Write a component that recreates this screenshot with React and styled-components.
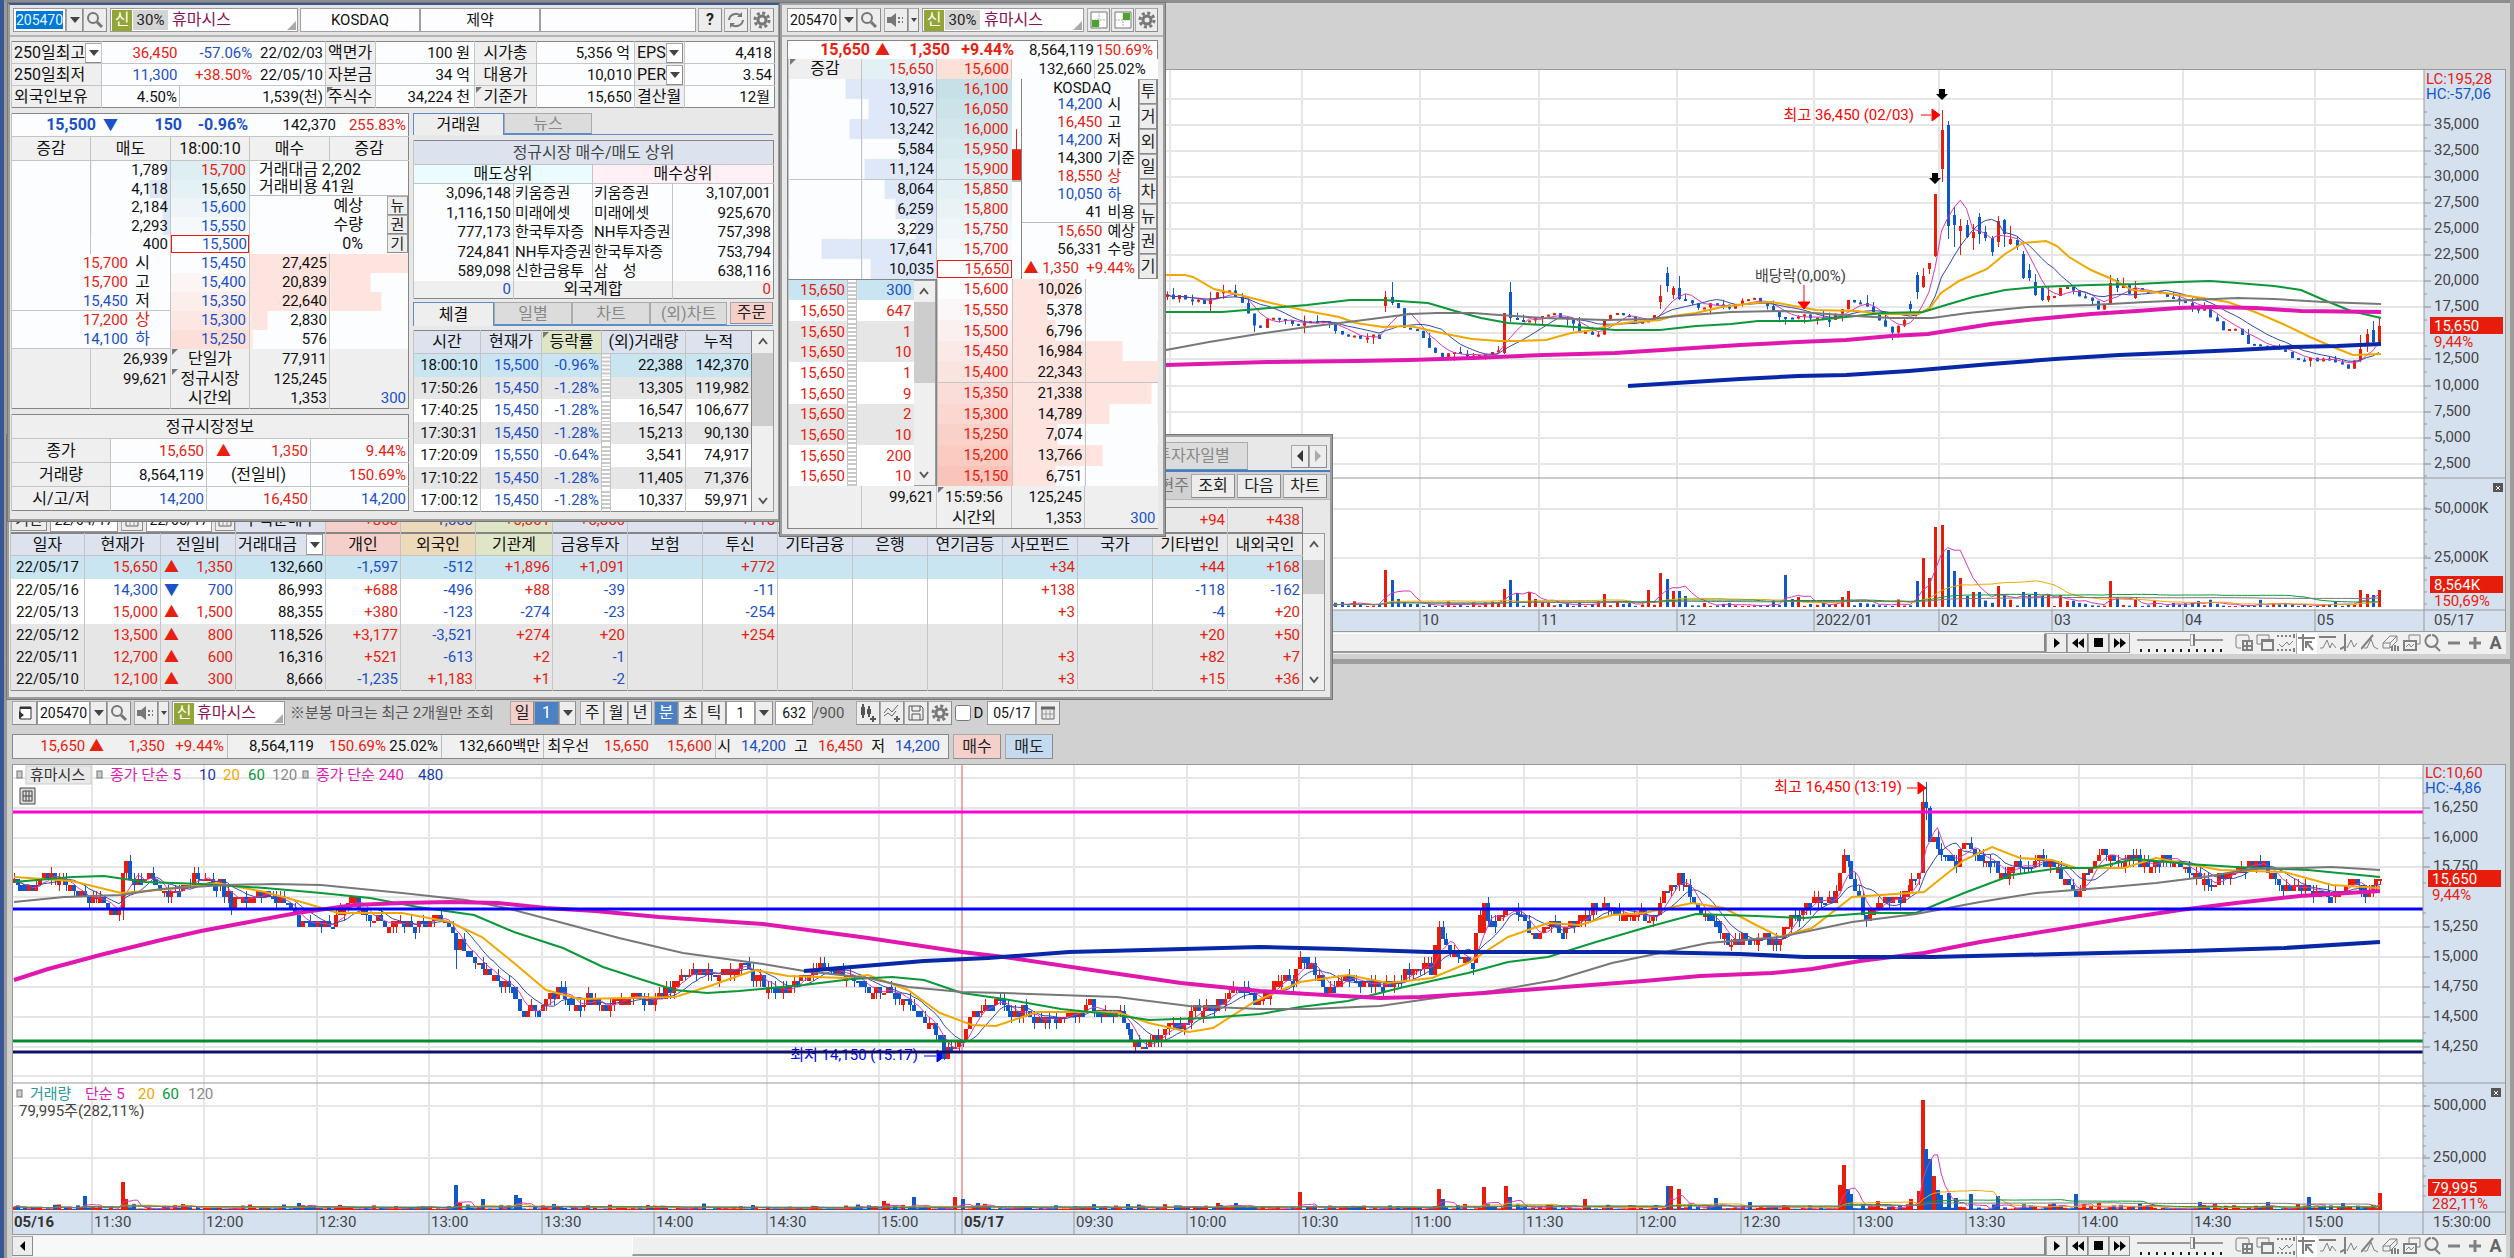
import React from "react";
import styled, { createGlobalStyle, css } from "styled-components";

const RED = "#e8210f";
const BLUE = "#1a50c8";
const UP = "#e81c0a";
const DOWN = "#1058c8";
const FONT = `Roboto, "Noto Sans CJK KR", sans-serif`;

const GlobalStyle = createGlobalStyle`
  * { box-sizing: border-box; }
  body { margin: 0; background: #d1d1d1; color: #111; font: 16px/18px ${FONT}; }
  button, input, table { font: inherit; color: inherit; }
  table { border-collapse: collapse; table-layout: fixed; }
  td, th { padding: 0; font-weight: 400; }
`;

/* ---------- layout ---------- */

const Desktop = styled.div`
  position: relative;
  min-height: 100vh;
  overflow: hidden;
  display: flex;
  flex-direction: column;
  border-left: 4px solid #3a5795;
  border-right: 4px solid #9c9c9c;
`;

const ChartWindow = styled.section`
  display: flex;
  flex-direction: column;
  padding: ${p => p.$top}px 4px 0 8px;
  border-left: 3px solid #9a9a9a;
  background: #d1d1d1;
`;

const UpperWindow = styled(ChartWindow)`
  padding-left: 0;
  padding-right: 4px;
  padding-bottom: 5px;
  border-bottom: 5px solid #9e9e9e;
  border-top: 3px solid #8d8d8d;
`;

const LowerWindow = styled(ChartWindow)`
  flex: 1;
  padding-left: 5px;
`;

const FloatingWindow = styled.section`
  position: absolute;
  left: ${p => p.$x}px;
  top: ${p => p.$y}px;
  width: ${p => p.$w}px;
  height: ${p => p.$h}px;
  background: #e8e8e8;
  border: 3px solid #9c9c9c;
  border-top: 3px solid ${p => p.$accent || "#a0a4ab"};
  outline: 1px solid #777;
  outline-offset: -1px;
  overflow: hidden;
`;

const Row = styled.div`
  display: flex;
  align-items: ${p => p.$align || "center"};
  gap: ${p => p.$gap || 0}px;
  padding: ${p => p.$pad || 0};
  height: ${p => (p.$h ? p.$h + "px" : "auto")};
`;

const Column = styled.div`
  display: flex;
  flex-direction: column;
  width: ${p => (p.$w ? p.$w + "px" : "auto")};
`;

const ToolRow = styled(Row)`
  background: #e4e4e4;
  height: 32px;
  padding: 0 3px;
  border-bottom: 2px solid #b4b4b4;
`;

const Gap = styled.div`
  width: ${p => p.$w}px;
  flex: none;
`;

/* ---------- controls ---------- */

const Button = styled.button`
  display: inline-flex;
  align-items: center;
  justify-content: center;
  flex: none;
  width: ${p => p.$w}px;
  height: ${p => p.$h || 24}px;
  padding: 0;
  white-space: nowrap;
  color: ${p => p.$c || "#222"};
  background: ${p => p.$bg || "#ededed"};
  border: 1px solid #a8a8a8;
  border-right-color: #8c8c8c;
  border-bottom-color: #8c8c8c;
`;

const CodeInput = styled.input`
  width: ${p => p.$w}px;
  height: 24px;
  flex: none;
  padding: 0;
  border: 1px solid #999;
  border-radius: 0;
  background: #fff;
  outline: 0;
  font-size: 14px;
  text-align: center;
  ${p =>
    p.$selected &&
    css`
      color: #e6f6ff;
      background: #0078d7;
      box-shadow: inset 0 0 0 2px #fff;
    `}
`;

const NameBox = styled.div`
  position: relative;
  display: flex;
  align-items: center;
  flex: none;
  width: ${p => p.$w}px;
  height: 24px;
  padding-left: 1px;
  color: #8c1055;
  background: #fff;
  border: 1px solid #999;
  &::after {
    content: "";
    position: absolute;
    right: 1px;
    bottom: 1px;
    border-left: 9px solid transparent;
    border-bottom: 9px solid #aaa;
  }
`;

const Badge = styled.span`
  width: 20px;
  height: 21px;
  line-height: 20px;
  text-align: center;
  color: #fff;
  background: #93a536;
`;

const Margin = styled.span`
  width: 35px;
  height: 20px;
  line-height: 20px;
  margin: 0 4px 0 1px;
  text-align: center;
  font-size: 15px;
  color: #222;
  background: #d4d4d4;
`;

const Field = styled.div`
  width: ${p => p.$w}px;
  height: 24px;
  flex: none;
  line-height: 22px;
  text-align: center;
  font-size: 15px;
  background: #fdfdff;
  border: 1px solid #a0a0a0;
`;

const Caret = () => (
  <svg width="10" height="6" viewBox="0 0 10 6">
    <path d="M0 0h10L5 6z" fill="#444" />
  </svg>
);

const Search = () => (
  <svg width="18" height="18" viewBox="0 0 18 18" fill="none" stroke="#777" strokeWidth="2">
    <circle cx="7" cy="7" r="5" />
    <path d="M11 11l5 5" strokeWidth="3" />
  </svg>
);

const Speaker = () => (
  <svg width="18" height="14" viewBox="0 0 18 14" fill="#777">
    <path d="M0 4h4l5-4v14l-5-4H0z" />
    <path d="M11 4h2v2h-2zM11 8h2v2h-2zM15 4h1v2h-1zM15 8h1v2h-1z" />
  </svg>
);

const Gear = () => (
  <svg width="18" height="18" viewBox="0 0 18 18" fill="none" stroke="#777">
    <circle cx="9" cy="9" r="4" strokeWidth="3" />
    <circle cx="9" cy="9" r="7" strokeWidth="3" strokeDasharray="3 2.5" />
  </svg>
);

const Refresh = () => (
  <svg width="18" height="18" viewBox="0 0 18 18" fill="none" stroke="#777" strokeWidth="2">
    <path d="M2 9a7 7 0 0 1 12-4M16 9a7 7 0 0 1-12 4" />
    <path d="M15 1v5h-5zM3 17v-5h5z" fill="#777" stroke="none" />
  </svg>
);

const Quad = ({ top }) => (
  <svg width="18" height="18" viewBox="0 0 18 18">
    <path d="M1 1h16v16H1z" fill="#fff" stroke="#777" />
    <path d="M9 1v16M1 9h16" stroke="#aaa" strokeDasharray="2 1" />
    <path d={top ? "M9 2h7v7H9z" : "M2 9h7v7H2z"} fill="#4aa52c" />
  </svg>
);

const CalendarIcon = () => (
  <svg width="16" height="16" viewBox="0 0 16 16" fill="none" stroke="#666">
    <path d="M2 3h12v11H2z" />
    <path d="M1 3h14" strokeWidth="3" />
    <path d="M6 5v9M10 5v9M2 9h12" stroke="#999" />
  </svg>
);

/* ---------- tables ---------- */

const Table = styled.table`
  width: ${p => p.$w}px;
  border: 1px solid #858585;
  background: #fcfdff;
`;

const Cell = styled.td`
  height: ${p => (p.$h ? p.$h + "px" : "auto")};
  padding: 0 ${p => (p.$pad === undefined ? 2 : p.$pad)}px;
  overflow: hidden;
  white-space: pre;
  line-height: 16px;
  font-size: ${p => p.$size || 15}px;
  font-weight: ${p => (p.$bold ? 700 : 400)};
  text-align: ${p => p.$a || "right"};
  color: ${p => p.$c || "#111"};
  background: ${p => p.$bg || "transparent"};
  border-left: ${p => (p.$plain ? "0" : "1px solid #c4c4c4")};
  border-bottom: ${p => (p.$line ? "1px solid #c4c4c4" : "0")};
`;

const Head = styled(Cell).attrs({ as: "th" })`
  font-size: 16px;
  text-align: ${p => p.$a || "center"};
`;

const Marked = styled.span`
  display: block;
  position: relative;
  &::before {
    content: "";
    position: absolute;
    left: -1px;
    top: -2px;
    border-top: 6px solid #777;
    border-right: 6px solid transparent;
  }
`;

const Boxed = styled.span`
  display: block;
  margin: 0 -2px;
  padding: 0 1px;
  border: 1px solid #e81c0a;
  background: #fff;
`;

const Split = styled.div`
  display: grid;
  grid-template-columns: ${p => p.$cols};
  align-items: center;
  text-align: right;
`;

const Txt = styled.span`
  color: ${p => p.$c || "#111"};
  font-weight: ${p => (p.$bold ? 700 : 400)};
  font-size: ${p => p.$size || 15}px;
  text-align: ${p => p.$a || "inherit"};
  white-space: pre;
`;

const Cols = ({ w }) => (
  <colgroup>
    {w.map((n, i) => (
      <col key={i} width={n} />
    ))}
  </colgroup>
);

const sign = v => (v.startsWith("+") ? RED : v.startsWith("-") ? BLUE : "#111");

/* ---------- tabs and scroll bars ---------- */

const Tabs = styled.div`
  display: flex;
  height: ${p => p.$h}px;
  border-bottom: 1px solid #5b8dc9;
`;

const Tab = styled.button`
  width: ${p => p.$w}px;
  height: ${p => p.$h}px;
  padding: 0;
  color: ${p => (p.$on ? "#111" : "#888")};
  background: ${p => (p.$on ? "#eee" : "#dcdcdc")};
  border: 1px solid ${p => (p.$on ? "#5b8dc9" : "#aaa")};
  border-bottom: ${p => (p.$on ? "0" : "1px solid #5b8dc9")};
`;

const ScrollTrack = styled.div`
  display: flex;
  flex-direction: column;
  justify-content: space-between;
  align-items: center;
  width: ${p => p.$w || 21}px;
  padding: 6px 0;
  background: linear-gradient(
    #efefef ${p => p.$from}px,
    #cdcdcd ${p => p.$from}px,
    #cdcdcd ${p => p.$to}px,
    #efefef ${p => p.$to}px
  );
  border: 1px solid #999;
  border-left: 0;
`;

const Chevron = ({ down }) => (
  <svg width="10" height="8" viewBox="0 0 10 8">
    <path d={down ? "M1 1l4 5 4-5" : "M1 7l4-5 4 5"} fill="none" stroke="#555" strokeWidth="2" />
  </svg>
);

const Scroll = ({ w, from, to }) => (
  <ScrollTrack $w={w} $from={from} $to={to}>
    <Chevron />
    <Chevron down />
  </ScrollTrack>
);

/* ---------- current price window ---------- */

const StockBadge = ({ w, margin }) => (
  <NameBox $w={w}>
    <Badge>신</Badge>
    {margin ? <Margin>30%</Margin> : <Gap $w={3} />}
    휴마시스
  </NameBox>
);

const LABEL = "#efefef";

const DropCell = styled.div`
  display: flex;
  justify-content: space-between;
  align-items: center;
`;

const Summary = () => (
  <Table $w={763}>
    <Cols w={[90, 78, 146, 50, 99, 62, 98, 50, 90]} />
    <tbody>
      <tr>
        <Head $h={22} $a="left" $bg={LABEL} $line>
          <DropCell>
            250일최고
            <Button $w={17} $h={20} $bg="#fff" aria-label="기간"><Caret /></Button>
          </DropCell>
        </Head>
        <Cell $c={RED} $line>36,450</Cell>
        <Cell $line $plain>
          <Split $cols="1fr 1fr"><Txt $c={BLUE}>-57.06%</Txt><Txt>22/02/03</Txt></Split>
        </Cell>
        <Head $a="left" $bg={LABEL} $line>액면가</Head>
        <Cell $line $pad={4}>100 원</Cell>
        <Head $bg={LABEL} $line>시가총</Head>
        <Cell $line $pad={4}>5,356 억</Cell>
        <Head $a="left" $bg={LABEL} $line>
          <DropCell>EPS<Button $w={17} $h={20} $bg="#fff" aria-label="EPS"><Caret /></Button></DropCell>
        </Head>
        <Cell $line>4,418</Cell>
      </tr>
      <tr>
        <Head $h={22} $a="left" $bg={LABEL} $line>250일최저</Head>
        <Cell $c={BLUE} $line>11,300</Cell>
        <Cell $line $plain>
          <Split $cols="1fr 1fr"><Txt $c={RED}>+38.50%</Txt><Txt>22/05/10</Txt></Split>
        </Cell>
        <Head $a="left" $bg={LABEL} $line>자본금</Head>
        <Cell $line $pad={4}>34 억</Cell>
        <Head $bg={LABEL} $line>대용가</Head>
        <Cell $line>10,010</Cell>
        <Head $a="left" $bg={LABEL} $line>
          <DropCell>PER<Button $w={17} $h={20} $bg="#fff" aria-label="PER"><Caret /></Button></DropCell>
        </Head>
        <Cell $line>3.54</Cell>
      </tr>
      <tr>
        <Head $h={22} $a="left" $bg={LABEL}>외국인보유</Head>
        <Cell>4.50%</Cell>
        <Cell>1,539(천)</Cell>
        <Head $a="left" $bg={LABEL}><Marked>주식수</Marked></Head>
        <Cell $pad={4}>34,224 천</Cell>
        <Head $bg={LABEL}><Marked>기준가</Marked></Head>
        <Cell>15,650</Cell>
        <Head $a="left" $bg={LABEL}>결산월</Head>
        <Cell $pad={4}>12월</Cell>
      </tr>
    </tbody>
  </Table>
);

const asksA = [
  ["1,789", "15,700", 8, RED],
  ["4,118", "15,650", 27, "#111"],
  ["2,184", "15,600", 10, BLUE],
  ["2,293", "15,550", 10, BLUE],
  ["400", "15,500", 0, BLUE],
];

const bidsA = [
  ["15,700", "시", RED, "15,450", "27,425", 200],
  ["15,700", "고", RED, "15,400", "20,839", 151],
  ["15,450", "저", BLUE, "15,350", "22,640", 166],
  ["17,200", "상", RED, "15,300", "2,830", 21],
  ["14,100", "하", BLUE, "15,250", "576", 3],
];

const totalsA = [
  ["26,939", "단일가", "77,911", ""],
  ["99,621", "정규시장", "125,245", ""],
  ["", "시간외", "1,353", "300"],
];

const rightBar = (pct, color) =>
  pct > 0 ? `linear-gradient(to left, ${color} ${pct}%, transparent ${pct}%)` : "transparent";
const leftBar = (pct, color) =>
  pct > 0 ? `linear-gradient(to right, ${color} ${pct}%, transparent ${pct}%)` : "transparent";
const clamp = (v, a, b) => Math.max(a, Math.min(b, v));

const QuoteText = styled.div`
  text-align: left;
  font-size: 16px;
  & > p {
    margin: 0;
    line-height: 17px;
    padding-left: 9px;
  }
  & > p + p {
    border-bottom: 1px solid #bbb;
  }
`;

const Expected = styled.div`
  display: flex;
`;

const ExpectedText = styled.div`
  flex: 1;
  padding-right: 24px;
  font-size: 16px;
  line-height: 19px;
  text-align: right;
`;

const BookA = () => (
  <Table $w={397}>
    <Cols w={[79, 80, 79, 80, 79]} />
    <tbody>
      <tr>
        <Cell colSpan={5} $h={23} $pad={0} $line>
          <Split $cols="84px 22px 64px 66px 88px 70px">
            <Txt $c={BLUE} $size={16} $bold>15,500</Txt>
            <Txt $c={BLUE}>▼</Txt>
            <Txt $c={BLUE} $size={16} $bold>150</Txt>
            <Txt $c={BLUE} $size={16} $bold>-0.96%</Txt>
            <Txt>142,370</Txt>
            <Txt $c={RED}>255.83%</Txt>
          </Split>
        </Cell>
      </tr>
      <tr>
        {["증감", "매도", "18:00:10", "매수", "증감"].map((t, i) => (
          <Head key={i} $h={24} $bg="#f0f0f0" $line>{t}</Head>
        ))}
      </tr>
      {asksA.map((r, i) => (
        <tr key={r[1]}>
          <Cell $h={i % 2 ? 18 : 19} />
          <Cell $bg={rightBar(r[2], "#dde7f8")}>{r[0]}</Cell>
          <Cell $c={r[3]} $bg={i < 4 ? `rgba(222,238,242,${1 - i * 0.25})` : "#fff"} $pad={i === 4 ? 2 : 3}>
            {i === 4 ? <Boxed>{r[1]}</Boxed> : r[1]}
          </Cell>
          {i === 0 && (
            <Cell colSpan={2} rowSpan={5} $pad={0} $a="left">
              <QuoteText>
                <p>거래대금 2,202</p>
                <p>거래비용 41원</p>
              </QuoteText>
              <Expected>
                <ExpectedText>
                  예상<br />수량<br />0%
                </ExpectedText>
                <Column>
                  {["뉴", "권", "기"].map(t => (
                    <Button key={t} $w={21} $h={19}>{t}</Button>
                  ))}
                </Column>
              </Expected>
            </Cell>
          )}
        </tr>
      ))}
      {bidsA.map((r, i) => (
        <tr key={i}>
          <Cell $h={19} colSpan={2} $pad={0} $c={r[2]} $line={i === 2 || i === 4}>
            <Split $cols="116px 22px">
              <Txt $c={r[2]}>{r[0]}</Txt>
              <Txt $c={i < 3 ? "#111" : r[2]} $size={16}>{r[1]}</Txt>
            </Split>
          </Cell>
          <Cell $c={BLUE} $pad={3} $bg={`rgba(252,223,216,${i * 0.25})`}>{r[3]}</Cell>
          <Cell $bg={leftBar(clamp(r[5], 0, 100), "#fde4df")}>{r[4]}</Cell>
          <Cell $bg={leftBar(clamp(r[5] - 100, 0, 100), "#fde4df")} />
        </tr>
      ))}
      {totalsA.map((r, i) => (
        <tr key={i}>
          <Cell $h={20} $bg="#efefef" />
          <Cell $bg="#efefef">{r[0]}</Cell>
          <Cell $bg="#efefef" $a="center" $size={16}>{i < 2 ? <Marked>{r[1]}</Marked> : r[1]}</Cell>
          <Cell $bg="#efefef">{r[2]}</Cell>
          <Cell $bg="#efefef" $c={BLUE}>{r[3]}</Cell>
        </tr>
      ))}
    </tbody>
  </Table>
);

const Regular = () => (
  <Table $w={397}>
    <Cols w={[99, 96, 104, 98]} />
    <tbody>
      <tr><Head colSpan={4} $h={24} $bg={LABEL} $line>정규시장정보</Head></tr>
      <tr>
        <Head $h={24} $bg={LABEL} $line>종가</Head>
        <Cell $c={RED} $line>15,650</Cell>
        <Cell $line><Split $cols="22px 1fr"><Txt $c={RED}>▲</Txt><Txt $c={RED}>1,350</Txt></Split></Cell>
        <Cell $c={RED} $line>9.44%</Cell>
      </tr>
      <tr>
        <Head $h={24} $bg={LABEL} $line>거래량</Head>
        <Cell $line>8,564,119</Cell>
        <Cell $a="center" $size={16} $line>(전일비)</Cell>
        <Cell $c={RED} $line>150.69%</Cell>
      </tr>
      <tr>
        <Head $h={24} $bg={LABEL}>시/고/저</Head>
        <Cell $c={BLUE}>14,200</Cell>
        <Cell $c={RED}>16,450</Cell>
        <Cell $c={BLUE}>14,200</Cell>
      </tr>
    </tbody>
  </Table>
);

const brokers = [
  ["3,096,148", "키움증권", "키움증권", "3,107,001"],
  ["1,116,150", "미래에셋", "미래에셋", "925,670"],
  ["777,173", "한국투자증", "NH투자증권", "757,398"],
  ["724,841", "NH투자증권", "한국투자증", "753,794"],
  ["589,098", "신한금융투", "삼　성", "638,116"],
];

const Brokers = () => (
  <Table $w={360}>
    <Cols w={[100, 79, 80, 101]} />
    <tbody>
      <tr><Head colSpan={4} $h={24} $bg="#dce3ee" $c="#444" $line>정규시장 매수/매도 상위</Head></tr>
      <tr>
        <Head colSpan={2} $h={19} $bg="#eafcff" $line>매도상위</Head>
        <Head colSpan={2} $bg="#fff0f8" $line>매수상위</Head>
      </tr>
      {brokers.map((r, i) => (
        <tr key={r[0]}>
          <Cell $h={i % 2 ? 20 : 19}>{r[0]}</Cell>
          <Cell $a="left" $pad={1}>{r[1]}</Cell>
          <Cell $a="left" $pad={1}>{r[2]}</Cell>
          <Cell>{r[3]}</Cell>
        </tr>
      ))}
      <tr>
        <Cell $h={18} $bg={LABEL} $c={BLUE}>0</Cell>
        <Cell colSpan={2} $bg={LABEL} $a="center" $size={16}>외국계합</Cell>
        <Cell $bg={LABEL} $c={RED}>0</Cell>
      </tr>
    </tbody>
  </Table>
);

const trades = [
  ["18:00:10", "15,500", "-0.96%", "22,388", "142,370"],
  ["17:50:26", "15,450", "-1.28%", "13,305", "119,982"],
  ["17:40:25", "15,450", "-1.28%", "16,547", "106,677"],
  ["17:30:31", "15,450", "-1.28%", "15,213", "90,130"],
  ["17:20:09", "15,550", "-0.64%", "3,541", "74,917"],
  ["17:10:22", "15,450", "-1.28%", "11,405", "71,376"],
  ["17:00:12", "15,450", "-1.28%", "10,337", "59,971"],
];

const STRIPES = "repeating-linear-gradient(#fff 0 2px, #c8c8c8 2px 4px)";

const Trades = () => (
  <Row $align="stretch">
    <Table $w={338}>
      <Cols w={[67, 61, 60, 9, 75, 66]} />
      <thead>
        <tr>
          <Head $h={23} $bg="#dce3ee" $line>시간</Head>
          <Head $bg="#dce3ee" $line>현재가</Head>
          <Head $bg="#dfe6c8" $line><Marked>등락률</Marked></Head>
          <Head colSpan={2} $bg="#dce3ee" $line>(외)거래량</Head>
          <Head $bg="#dce3ee" $line>누적</Head>
        </tr>
      </thead>
      <tbody>
        {trades.map((r, i) => {
          const bg = i === 0 ? "#c8e5f1" : i % 2 ? "#e6e6e6" : "#fff";
          return (
            <tr key={r[0]}>
              <Cell $h={i % 2 ? 22 : 23} $bg={bg}>{r[0]}</Cell>
              <Cell $c={BLUE} $bg={bg}>{r[1]}</Cell>
              <Cell $c={BLUE} $bg={bg}>{r[2]}</Cell>
              <Cell $bg={STRIPES} />
              <Cell $bg={bg}>{r[3]}</Cell>
              <Cell $bg={bg}>{r[4]}</Cell>
            </tr>
          );
        })}
      </tbody>
    </Table>
    <Scroll from={22} to={95} w={22} />
  </Row>
);

const CodeTools = ({ value, selected, speaker }) => (
  <>
    <CodeInput $w={53} $selected={selected} defaultValue={value} aria-label="종목코드" />
    <Button $w={17} aria-label="종목 목록"><Caret /></Button>
    <Button $w={24} aria-label="종목 검색"><Search /></Button>
    <Gap $w={3} />
    {speaker && (
      <>
        <Button $w={24} aria-label="음성"><Speaker /></Button>
        <Button $w={11} aria-label="음성 설정">
          <svg width="6" height="4" viewBox="0 0 6 4"><path d="M0 0h6L3 4z" fill="#444" /></svg>
        </Button>
        <Gap $w={3} />
      </>
    )}
  </>
);

const PriceWindow = () => (
  <FloatingWindow $x={3} $y={2} $w={774} $h={520} $accent="#3a5795">
    <ToolRow>
      <CodeTools value="205470" selected />
      <StockBadge w={188} margin />
      <Gap $w={2} />
      <Field $w={120}>KOSDAQ</Field>
      <Field $w={120}>제약</Field>
      <Field $w={156} />
      <Gap $w={2} />
      <Row $gap={2}>
        <Button $w={24}><b>?</b></Button>
        <Button $w={24} aria-label="새로고침"><Refresh /></Button>
        <Button $w={24} aria-label="설정"><Gear /></Button>
      </Row>
    </ToolRow>
    <Row $pad="4px 0 0 1px"><Summary /></Row>
    <Row $align="flex-start" $gap={5} $pad="5px 0 0 1px">
      <Column $w={397}>
        <BookA />
        <Row $pad="5px 0 0"><Regular /></Row>
      </Column>
      <Column $w={360}>
        <Tabs $h={22}>
          <Tab $w={91} $h={22} $on>거래원</Tab>
          <Tab $w={88} $h={21}>뉴스</Tab>
        </Tabs>
        <Row $pad="5px 0 3px"><Brokers /></Row>
        <Tabs $h={24}>
          <Tab $w={81} $h={24} $on>체결</Tab>
          <Tab $w={78} $h={23}>일별</Tab>
          <Tab $w={78} $h={23}>차트</Tab>
          <Tab $w={77} $h={23}>(외)차트</Tab>
          <Gap $w={3} />
          <Button $w={43} $h={22} $bg="#f5cfca">주문</Button>
        </Tabs>
        <Row $pad="4px 0 0"><Trades /></Row>
      </Column>
    </Row>
  </FloatingWindow>
);

/* ---------- order book window ---------- */

const asksB = [
  ["13,916", "16,100", 122],
  ["10,527", "16,050", 92],
  ["13,242", "16,000", 116],
  ["5,584", "15,950", 49],
  ["11,124", "15,900", 97],
  ["8,064", "15,850", 70],
  ["6,259", "15,800", 55],
  ["3,229", "15,750", 28],
  ["17,641", "15,700", 156],
  ["10,035", "15,650", 89],
];

const bidsB = [
  ["15,600", "10,026", 90],
  ["15,550", "5,378", 48],
  ["15,500", "6,796", 60],
  ["15,450", "16,984", 152],
  ["15,400", "22,343", 200],
  ["15,350", "21,338", 191],
  ["15,300", "14,789", 133],
  ["15,250", "7,074", 63],
  ["15,200", "13,766", 123],
  ["15,150", "6,751", 60],
];

const ticks = ["300", "647", "1", "10", "1", "9", "2", "10", "200", "10"];

const Panel = styled.div`
  width: 371px;
  border: 1px solid #858585;
  background: #fcfdff;
  & table { border: 0; }
`;

const Info = styled.div`
  width: 118px;
  border-left: 1px solid #858585;
  border-right: 1px solid #858585;
`;

const InfoRow = styled.div`
  display: grid;
  grid-template-columns: 80px 1fr;
  column-gap: 5px;
  height: ${p => (p.$line ? 19 : 18)}px;
  line-height: 17px;
  border-bottom: ${p => (p.$line ? "1px solid #bbb" : "0")};
  & > :first-child { text-align: right; }
`;

const InfoTitle = styled.div`
  height: 17px;
  line-height: 18px;
  padding-left: 4px;
  font-size: 15px;
  text-align: center;
`;

const Change = styled.div`
  display: flex;
  justify-content: space-between;
  padding: 0 3px 0 1px;
`;

const infoRows = [
  ["14,200", "시", BLUE, "#111"],
  ["16,450", "고", RED, "#111"],
  ["14,200", "저", BLUE, "#111"],
  ["14,300", "기준", "#111", "#111"],
  ["18,550", "상", RED, RED],
  ["10,050", "하", BLUE, BLUE],
  ["41", "비용", "#111", "#111"],
  ["15,650", "예상", RED, "#111"],
  ["56,331", "수량", "#111", "#111"],
];

const TickTable = styled(Column)`
  border-right: 1px solid #858585;
  border-top: 1px solid #858585;
`;

const BookB = () => (
  <Panel>
    <Split $cols="82px 20px 60px 64px 80px 59px">
      <Txt $c={RED} $size={16} $bold>15,650</Txt>
      <Txt $c={RED}>▲</Txt>
      <Txt $c={RED} $size={16} $bold>1,350</Txt>
      <Txt $c={RED} $size={16} $bold>+9.44%</Txt>
      <Txt>8,564,119</Txt>
      <Txt $c={RED}>150.69%</Txt>
    </Split>
    <Table $w={369}>
      <Cols w={[73, 75, 75, 83, 63]} />
      <tbody>
        <tr>
          <Head $h={20} $bg="#efefef"><Marked>증감</Marked></Head>
          <Cell $c={RED} $bg="#e4f1f4">15,650</Cell>
          <Cell $c={RED} $bg="#fde0d8">15,600</Cell>
          <Cell>132,660</Cell>
          <Cell $a="left">25.02%</Cell>
        </tr>
      </tbody>
    </Table>
    <Row $align="stretch">
      <Table $w={223}>
        <Cols w={[73, 75, 75]} />
        <tbody>
          {asksB.map((r, i) => (
            <tr key={r[1]}>
              <Cell $h={20} $line={i === 4} $bg={rightBar(clamp(r[2] - 100, 0, 100), "#dfe8f9")} />
              <Cell $line={i === 4} $bg={rightBar(clamp(r[2], 0, 100), "#dfe8f9")}>{r[0]}</Cell>
              <Cell $c={RED} $line={i === 4} $pad={i === 9 ? 2 : 3} $bg={`rgba(197,224,230,${1 - i * 0.11})`}>
                {i === 9 ? <Boxed>{r[1]}</Boxed> : r[1]}
              </Cell>
            </tr>
          ))}
        </tbody>
      </Table>
      <svg width="10" height="200" viewBox="0 0 10 200">
        <path d="M4 50h1v20H4zM0 70h10v31H0z" fill={UP} />
        <path d="M0 102h10" stroke="#777" />
      </svg>
      <Info>
        <InfoTitle>KOSDAQ</InfoTitle>
        {infoRows.map((r, i) => (
          <InfoRow key={i} $line={i === 6}>
            <Txt $c={r[2]}>{r[0]}</Txt>
            <Txt $c={r[3]}>{r[1]}</Txt>
          </InfoRow>
        ))}
        <Change><Txt $c={RED}>▲ 1,350</Txt><Txt $c={RED}>+9.44%</Txt></Change>
      </Info>
      <Column>
        {["투", "거", "외", "일", "차", "뉴", "권", "기"].map(t => (
          <Button key={t} $w={18} $h={25}>{t}</Button>
        ))}
      </Column>
    </Row>
    <Row $align="stretch">
      <TickTable>
        <Row $align="stretch">
          <Table $w={125}>
            <Cols w={[59, 9, 57]} />
            <tbody>
              {ticks.map((t, i) => {
                const bg = i === 0 ? "#c8e5f1" : [2, 3, 6, 7].includes(i) ? "#e6e6e6" : "#fff";
                return (
                  <tr key={i}>
                    <Cell $h={i % 3 ? 21 : 20} $c={RED} $bg={bg}>15,650</Cell>
                    <Cell $bg={STRIPES} />
                    <Cell $c={i ? RED : BLUE} $bg={bg}>{t}</Cell>
                  </tr>
                );
              })}
            </tbody>
          </Table>
          <Scroll from={21} to={102} w={22} />
        </Row>
      </TickTable>
      <Table $w={221}>
        <Cols w={[75, 73, 73]} />
        <tbody>
          {bidsB.map((r, i) => (
            <tr key={r[0]}>
              <Cell $h={i % 3 ? 21 : 20} $c={RED} $pad={3} $line={i === 4} $bg={`rgba(248,190,178,${i * 0.1})`}>{r[0]}</Cell>
              <Cell $line={i === 4} $bg={leftBar(clamp(r[2], 0, 100), "#fde4df")}>{r[1]}</Cell>
              <Cell $line={i === 4} $bg={leftBar(clamp(r[2] - 100, 0, 100), "#fde4df")} />
            </tr>
          ))}
        </tbody>
      </Table>
    </Row>
    <Table $w={369}>
      <Cols w={[73, 75, 75, 73, 73]} />
      <tbody>
        <tr>
          <Cell $h={21} $bg={LABEL} />
          <Cell $bg={LABEL}>99,621</Cell>
          <Cell $bg={LABEL} $a="center"><Marked>15:59:56</Marked></Cell>
          <Cell $bg={LABEL}>125,245</Cell>
          <Cell $bg={LABEL} />
        </tr>
        <tr>
          <Cell $h={21} $bg={LABEL} />
          <Cell $bg={LABEL} />
          <Cell $bg={LABEL} $a="center" $size={16}>시간외</Cell>
          <Cell $bg={LABEL}>1,353</Cell>
          <Cell $bg={LABEL} $c={BLUE}>300</Cell>
        </tr>
      </tbody>
    </Table>
  </Panel>
);

const OrderWindow = () => (
  <FloatingWindow $x={775} $y={2} $w={387} $h={535}>
    <ToolRow>
      <Gap $w={2} />
      <CodeTools value="205470" speaker />
      <StockBadge w={162} margin />
      <Gap $w={3} />
      <Row $gap={1}>
        <Button $w={23} aria-label="화면 분할"><Quad /></Button>
        <Button $w={23} aria-label="화면 배치"><Quad top /></Button>
        <Button $w={23} aria-label="설정"><Gear /></Button>
      </Row>
    </ToolRow>
    <Row $pad="3px 0 0 5px"><BookB /></Row>
  </FloatingWindow>
);

/* ---------- investor window ---------- */

const investorCols = [74, 76, 75, 90, 75, 75, 77, 75, 75, 75, 75, 75, 75, 75, 75, 75, 75];
const investorHeads = ["개인", "외국인", "기관계", "금융투자", "보험", "투신", "기타금융", "은행", "연기금등", "사모펀드", "국가", "기타법인", "내외국인"];
const headColors = { 개인: "#f5cfca", 외국인: "#ecdabb", 기관계: "#dfe6c8", 기타법인: "#e8e8e8", 내외국인: "#e8e8e8" };
const totals = ["+850", "-1,550", "+6,301", "+5,856", "", "+115", "", "", "", "", "", "+94", "+438"];

const investors = [
  ["22/05/17", "15,650", "▲", "1,350", "132,660", "-1,597", "-512", "+1,896", "+1,091", "", "+772", "", "", "", "+34", "", "+44", "+168"],
  ["22/05/16", "14,300", "▼", "700", "86,993", "+688", "-496", "+88", "-39", "", "-11", "", "", "", "+138", "", "-118", "-162"],
  ["22/05/13", "15,000", "▲", "1,500", "88,355", "+380", "-123", "-274", "-23", "", "-254", "", "", "", "+3", "", "-4", "+20"],
  ["22/05/12", "13,500", "▲", "800", "118,526", "+3,177", "-3,521", "+274", "+20", "", "+254", "", "", "", "", "", "+20", "+50"],
  ["22/05/11", "12,700", "▲", "600", "16,316", "+521", "-613", "+2", "-1", "", "", "", "", "", "+3", "", "+82", "+7"],
  ["22/05/10", "12,100", "▲", "300", "8,666", "-1,235", "+1,183", "+1", "-2", "", "", "", "", "", "+3", "", "+15", "+36"],
];

const InvestorTools = styled.div`
  display: flex;
  justify-content: flex-end;
  align-items: center;
  gap: 2px;
  height: 28px;
  padding-right: 3px;
  color: #777;
  background: #d1d1d1;
  border-bottom: 1px solid #b8b8b8;
`;

const InvestorTabs = styled.div`
  display: flex;
  justify-content: flex-end;
  align-items: center;
  height: 35px;
  padding: 5px 3px 0 0;
  border-bottom: 2px solid #4a7cc0;
`;

const Totals = () => (
  <Table $w={1292}>
    <Cols w={[225, 90, 75, 75, 77, 75, 75, 75, 75, 75, 75, 75, 75, 75, 75]} />
    <tbody>
      <tr>
        <Cell $h={24} $a="left" $bg="#e8e8e8" $pad={0}>
          <Row $gap={3}>
            <Button $w={36} $h={22}>기간</Button>
            <CodeInput $w={68} defaultValue="22/04/17" aria-label="시작일" />
            <Button $w={22} $h={22} aria-label="시작일 달력"><CalendarIcon /></Button>
            <CodeInput $w={66} defaultValue="22/05/17" aria-label="종료일" />
            <Button $w={20} $h={22} aria-label="종료일 달력"><CalendarIcon /></Button>
          </Row>
        </Cell>
        <Head $bg="#dce3ee">누적순매수</Head>
        {totals.map((t, i) => (
          <Cell key={i} $c={sign(t)} $bg={headColors[investorHeads[i]] || "#dce3ee"}>{t}</Cell>
        ))}
      </tr>
    </tbody>
  </Table>
);

const Investors = () => (
  <Row $align="stretch">
    <Table $w={1292}>
      <Cols w={investorCols} />
      <thead>
        <tr>
          <Head $h={22} $bg="#dce3ee" $line>일자</Head>
          <Head $bg="#dce3ee" $line>현재가</Head>
          <Head $bg="#dce3ee" $line>전일비</Head>
          <Head $bg="#dce3ee" $line>
            <DropCell>거래대금<Button $w={17} $h={21} $bg="#fff" aria-label="단위"><Caret /></Button></DropCell>
          </Head>
          {investorHeads.map(h => (
            <Head key={h} $bg={headColors[h] || "#dce3ee"} $line>{h}</Head>
          ))}
        </tr>
      </thead>
      <tbody>
        {investors.map((r, i) => {
          const bg = i === 0 ? "#c8e5f1" : i < 3 ? "#fff" : "#e6e6e6";
          const c = r[2] === "▲" ? RED : BLUE;
          return (
            <tr key={r[0]}>
              <Cell $h={i % 2 ? 22 : 23} $bg={bg} $a="center">{r[0]}</Cell>
              <Cell $c={c} $bg={bg}>{r[1]}</Cell>
              <Cell $c={c} $bg={bg}>
                <Split $cols="16px 1fr"><Txt $c={c}>{r[2]}</Txt><Txt $c={c}>{r[3]}</Txt></Split>
              </Cell>
              <Cell $bg={bg}>{r[4]}</Cell>
              {r.slice(5).map((v, k) => (
                <Cell key={k} $bg={bg} $c={sign(v)}>{v}</Cell>
              ))}
            </tr>
          );
        })}
      </tbody>
    </Table>
    <Scroll from={26} to={60} w={22} />
  </Row>
);

const InvestorWindow = () => (
  <FloatingWindow $x={2} $y={434} $w={1327} $h={266}>
    <InvestorTabs>
      <Tab $w={110} $h={28}>투자자일별</Tab>
      <Gap $w={43} />
      <Button $w={18} $h={23} aria-label="이전">
        <svg width="6" height="12" viewBox="0 0 6 12"><path d="M6 0v12L0 6z" fill="#333" /></svg>
      </Button>
      <Button $w={18} $h={23} aria-label="다음 탭">
        <svg width="6" height="12" viewBox="0 0 6 12"><path d="M0 0v12l6-6z" fill="#aaa" /></svg>
      </Button>
    </InvestorTabs>
    <InvestorTools>
      잔고현주
      <Button $w={44}>조회</Button>
      <Button $w={44}>다음</Button>
      <Button $w={44}>차트</Button>
    </InvestorTools>
    <Row $pad="7px 0 0 1px"><Totals /></Row>
    <Row $pad="0 0 0 1px"><Investors /></Row>
  </FloatingWindow>
);

/* ---------- chart data ---------- */

const seeded = seed => () => {
  seed = (seed * 16807) % 2147483647;
  return seed / 2147483647;
};

const pairs = text => text.trim().split(/\s+/).map(p => p.split(",").map(Number));

const valueAt = (path, x) => {
  const i = path.findIndex(p => p[0] >= x);
  if (i <= 0) return path[i === 0 ? 0 : path.length - 1][1];
  const [x0, y0] = path[i - 1];
  const [x1, y1] = path[i];
  return y0 + ((y1 - y0) * (x - x0)) / (x1 - x0);
};

const nearest = (rows, x, step) => rows.find(r => Math.abs(r[0] - x) < step / 2);

function buildCandles({ path, step, count, last, jitter, wick, tick, fixed, volumes, baseVolume, seed }) {
  const rnd = seeded(seed);
  const out = [];
  let prev = path[0][1];
  for (let i = 0; i < count; i++) {
    const x = last - (count - 1 - i) * step;
    let close = valueAt(path, x) + (rnd() - 0.5) * jitter;
    if (tick) close = Math.round((close - 3) / tick) * tick + 3;
    let bar = {
      x,
      up: close < prev || (close === prev && rnd() > 0.5),
      top: Math.min(prev, close),
      bottom: Math.max(prev, close),
    };
    // trades on a price grid keep bodies and wicks on whole ticks
    if (tick && bar.top === bar.bottom && rnd() > 0.4) bar.bottom += tick;
    const reach = tick ? tick : rnd() * wick;
    bar.high = bar.top - (rnd() > 0.6 ? reach : 0);
    bar.low = bar.bottom + (rnd() > 0.6 ? reach : 0);
    const f = fixed && nearest(fixed, x, step);
    if (f) {
      bar = { x, top: f[1], bottom: f[2], up: f[3] === 1, high: f[4] || f[1], low: f[5] || f[2] };
      close = bar.up ? bar.top : bar.bottom;
    }
    const v = nearest(volumes, x, step);
    bar.volume = v ? v[1] : 1 + rnd() * rnd() * baseVolume;
    bar.close = close;
    prev = close;
    out.push(bar);
  }
  return out;
}

const average = (bars, key, n) =>
  bars.map((b, i) => {
    const part = bars.slice(Math.max(0, i - n + 1), i + 1);
    return [b.x, part.reduce((s, p) => s + p[key], 0) / part.length];
  });

const line = pts => pts.map(p => `${p[0].toFixed(1)},${p[1].toFixed(1)}`).join(" ");

const dailyPath = pairs(`1166,297 1178,297 1205,302 1222,290 1236,295 1245,309 1252,324 1260,328 1267,316 1280,317
  1298,326 1312,323 1330,324 1339,332 1356,337 1379,337 1385,303 1392,300 1398,309 1405,328 1417,332 1423,336
  1430,347 1437,358 1446,351 1463,355 1481,355 1501,351 1504,330 1510,316 1517,320 1524,324 1531,319 1544,318
  1555,313 1568,318 1580,332 1592,337 1600,332 1606,316 1620,313 1642,324 1654,313 1660,300 1667,278 1673,292
  1680,293 1689,303 1702,311 1709,303 1727,307 1740,303 1754,299 1767,307 1780,320 1798,314 1807,316 1830,318
  1843,307 1850,299 1858,302 1866,306 1873,313 1879,322 1886,327 1892,333 1898,327 1904,320 1911,307 1917,283
  1923,280 1929,266 1936,200 1942,150 1948,215 1954,222 1960,228 1967,233 1979,225 1985,235 1992,245 1998,228
  2004,228 2017,244 2023,270 2029,276 2035,290 2042,297 2048,298 2054,295 2060,287 2073,290 2080,297 2091,300
  2098,308 2104,306 2111,290 2117,284 2130,292 2136,293 2160,292 2178,300 2192,307 2205,310 2223,328 2237,330
  2248,343 2260,344 2274,348 2283,353 2292,358 2301,360 2315,360 2328,360 2342,366 2348,371 2355,360 2361,353
  2367,339 2373,337 2379,328`);

// x, top, bottom, up, high, low
const dailyFixed = pairs(`1385,297,306,1,291,312 1392,297,303,0,282,305 1504,313,353,1,313,354 1510,292,318,0,282,322
  1660,296,302,1,285,309 1667,273,286,0,267,292 1673,288,295,1,286,299 1679,288,299,0,276,300
  1911,304,309,0,301,312 1917,275,292,0,272,299 1923,276,287,1,268,288 1929,263,269,1,263,274 1936,194,256,1,194,257
  1942,130,169,1,110,182 1948,125,226,0,121,239 1954,215,225,0,207,247 1960,226,231,1,219,255 1967,225,237,0,220,238
  1973,232,238,1,224,250 1979,217,234,0,213,244 1985,232,238,0,226,241 1992,238,252,0,236,256 1998,221,242,1,216,247
  2004,220,234,0,219,247 2010,239,244,1,226,245 2017,240,247,0,236,250 2023,254,278,0,251,279 2029,270,278,0,264,281
  2035,282,295,0,274,296 2042,288,300,0,286,301 2048,296,300,1,287,302 2111,283,303,1,275,305 2117,280,288,0,278,292
  2136,288,298,1,281,299 2361,349,360,1,335,362 2367,334,345,1,329,352 2373,330,342,0,321,345 2379,326,344,1,318,345`);

const dailyVolumes = pairs(`1385,37 1392,27 1398,8 1404,5 1504,18 1510,27 1517,14 1529,15 1535,8 1604,13 1648,17 1660,34
  1667,28 1673,16 1679,16 1685,11 1785,32 1792,8 1798,10 1842,10 1848,16 1917,26 1923,49 1929,29 1936,80 1942,82
  1948,57 1954,36 1960,29 1967,11 1973,15 1979,15 1998,21 2004,12 2023,15 2029,12 2035,15 2042,11 2048,12 2060,12
  2111,26 2117,10 2136,8 2361,17 2367,13 2373,12 2379,17`);

const daily = buildCandles({
  path: dailyPath, step: 6.25, count: 195, last: 2379, jitter: 5, wick: 8,
  fixed: dailyFixed, volumes: dailyVolumes, baseVolume: 8, seed: 41,
});

const dailyLines = [
  ["#d838b8", 1, average(daily, "close", 5)],
  ["#3048a8", 1, average(daily, "close", 10)],
  ["#f0a800", 2, pairs(`1166,275 1185,275 1193,277 1214,289 1240,295 1267,302 1289,307 1307,311 1339,317 1356,323 1383,327 1410,326 1428,330 1446,334 1472,339 1499,341 1517,341 1546,340 1571,333 1593,330 1611,325 1633,322 1660,320 1673,316 1696,313 1722,307 1754,303 1772,302 1794,306 1816,310 1856,311 1882,314 1918,314 1930,308 1941,293 1959,281 1987,269 2005,254 2023,243 2046,241 2057,246 2069,257 2091,270 2114,280 2132,290 2164,293 2196,297 2228,302 2255,312 2283,324 2310,337 2333,347 2353,355 2381,354`)],
  ["#0a9838", 2, pairs(`1166,312 1222,312 1258,309 1307,305 1350,300 1383,300 1428,303 1455,311 1481,318 1508,323 1544,325 1589,328 1615,330 1660,330 1696,326 1731,324 1758,321 1807,321 1856,316 1882,313 1923,312 1946,305 1973,297 2005,290 2037,287 2091,285 2137,284 2178,282 2210,281 2237,283 2274,286 2301,290 2324,300 2351,311 2381,318`)],
  ["#787878", 2, pairs(`1166,350 1209,342 1258,334 1307,327 1356,321 1410,314 1437,313 1473,313 1499,315 1544,318 1606,320 1651,319 1678,316 1731,312 1785,311 1856,316 1891,318 1932,318 1968,313 2028,307 2091,305 2146,302 2192,300 2237,298 2274,299 2324,302 2381,304`)],
  ["#e018b0", 4, pairs(`1166,365 1267,362 1356,361 1410,360 1473,358 1544,355 1615,353 1678,349 1740,345 1798,342 1846,340 1891,336 1928,334 1991,324 2037,319 2091,314 2137,311 2178,308 2210,307 2255,308 2301,311 2381,312`)],
  ["#0828a8", 4, pairs(`1628,386 1740,379 1798,376 1846,375 1909,371 1991,364 2055,359 2119,355 2192,352 2237,350 2292,347 2337,346 2381,344`)],
];

const minutePath = pairs(`14,883 32,890 44,875 56,883 72,888 84,897 96,898 108,910 119,913 121,880 125,860 131,880 143,875
  157,883 169,892 185,887 197,875 209,880 221,885 231,903 257,893 269,898 289,898 297,920 313,925 333,925 346,902
  354,898 362,913 374,917 386,922 414,925 434,917 446,923 456,940 462,947 474,960 486,970 502,983 514,990 521,1012
  538,1010 546,997 561,988 571,1003 587,997 603,1007 623,997 651,1003 667,990 683,980 699,973 723,970 743,965 755,978
  775,990 792,987 804,973 828,967 848,977 868,990 892,990 908,998 920,1017 936,1030 943,1057 952,1047 962,1043
  972,1013 984,1012 998,997 1009,1013 1025,1008 1037,1020 1061,1017 1077,1012 1091,1003 1101,1010 1121,1018 1131,1037
  1140,1045 1157,1037 1169,1028 1181,1027 1193,1010 1209,1010 1221,1000 1238,987 1250,997 1258,1003 1264,997 1276,980
  1292,980 1302,953 1308,967 1316,972 1324,990 1344,977 1364,983 1392,985 1408,973 1420,967 1432,972 1436,930 1448,950
  1456,957 1472,962 1482,907 1492,923 1510,910 1520,920 1536,937 1548,920 1564,930 1580,923 1592,905 1604,907 1616,913
  1636,910 1652,920 1664,893 1677,875 1688,890 1700,913 1716,923 1730,947 1740,937 1760,937 1776,942 1792,920 1812,902
  1832,900 1845,860 1856,890 1865,917 1880,903 1900,898 1920,870 1925,805 1932,840 1940,850 1948,857 1956,863 1964,840
  1976,853 1992,857 2000,877 2016,863 2028,867 2037,855 2048,860 2060,873 2077,893 2088,870 2101,847 2112,860 2132,860
  2152,870 2160,853 2180,863 2208,883 2228,877 2248,863 2264,863 2276,883 2300,885 2316,893 2340,892 2349,880 2368,895
  2380,879`);

const minuteFixed = pairs(`121,873,910,1,873,920 124,855,873,1,831,873 457,933,950,0,933,969 943,1035,1059,0,1035,1060
  1437,927,969,1,921,969 1482,903,933,1,903,933 1845,855,873,1,849,873 1923,802,873,1,790,873 1927,802,808,0,782,820
  1931,808,842,0,806,842`);

const minuteVolumes = pairs(`86,14 123,28 127,11 299,7 456,25 460,7 483,11 517,15 521,12 754,5 885,9 914,13 955,13 964,11
  976,7 1127,6 1217,7 1235,7 1301,18 1437,21 1442,11 1482,23 1506,24 1510,13 1586,11 1666,24 1670,24 1677,21 1717,12
  1749,8 1841,25 1845,45 1849,21 1853,16 1877,9 1912,11 1919,19 1923,110 1927,61 1931,51 1934,34 1938,20 1942,15 1949,17 1956,12
  1972,16 1997,14 2077,16 2100,7 2200,8 2269,8 2309,13 2343,7 2379,17`);

const minute = buildCandles({
  path: minutePath, step: 3.75, count: 632, last: 2380, jitter: 9, wick: 6, tick: 6,
  fixed: minuteFixed, volumes: minuteVolumes, baseVolume: 6, seed: 97,
});

const minuteLines = [
  ["#d838b8", 1, average(minute, "close", 5)],
  ["#3048a8", 1, average(minute, "close", 10)],
  ["#f0a800", 2, pairs(`14,877 72,881 121,893 169,889 217,883 265,892 305,903 338,913 402,913 450,922 482,937 514,963 546,990 579,999 675,997 707,987 755,970 788,976 844,978 868,975 908,990 940,1013 972,1025 996,1026 1037,1012 1117,1012 1149,1023 1189,1032 1213,1028 1254,1002 1300,982 1348,975 1388,983 1432,978 1468,963 1508,937 1548,923 1580,925 1612,915 1644,913 1692,903 1724,908 1756,925 1780,937 1812,928 1852,897 1924,892 1964,860 1992,847 2020,858 2052,860 2076,868 2124,868 2156,858 2220,870 2284,872 2332,885 2380,888`)],
  ["#0a9838", 2, pairs(`14,882 72,877 104,876 145,882 201,884 265,888 321,893 370,898 418,907 474,915 514,932 563,948 603,967 643,980 675,990 707,993 739,991 804,985 852,979 892,977 924,980 962,993 1004,999 1061,1009 1109,1014 1149,1020 1205,1018 1260,1014 1300,1007 1348,1001 1404,987 1468,973 1508,962 1548,957 1596,942 1644,928 1696,914 1756,916 1804,918 1868,913 1916,913 1964,893 2012,875 2060,868 2092,868 2136,859 2188,864 2236,867 2308,870 2380,877`)],
  ["#787878", 2, pairs(`14,902 64,897 121,895 161,889 225,885 273,884 321,885 402,893 466,900 506,908 563,923 619,938 683,953 763,964 804,971 868,978 908,987 962,992 1004,993 1117,997 1189,1006 1260,1009 1308,1009 1380,1006 1428,999 1492,991 1556,980 1612,963 1660,953 1708,943 1780,937 1852,922 1916,914 1980,902 2036,893 2100,888 2156,883 2204,877 2252,869 2300,868 2332,867 2380,870`)],
  ["#e018b0", 4, pairs(`14,980 48,969 104,954 161,940 201,931 249,922 297,913 354,905 402,903 450,902 498,903 546,908 595,911 659,917 763,924 868,938 962,952 1004,957 1085,969 1181,983 1260,991 1308,994 1380,998 1420,997 1484,993 1564,987 1644,981 1700,976 1772,973 1812,969 1860,961 1924,953 1980,942 2060,929 2140,916 2180,910 2236,903 2300,896 2380,891`)],
  ["#0828a8", 4, pairs(`804,971 852,967 924,961 988,958 1069,952 1260,947 1340,949 1428,952 1644,952 1740,954 1804,957 1932,957 2060,954 2188,951 2284,948 2380,942`)],
];

/* ---------- charts ---------- */

const ChartSvg = styled.svg`
  display: block;
  width: 100%;
  height: ${p => p.$h}px;
  background: #fff;
  font: 15px ${FONT};
`;

const Plot = ({ bars, lines, width, base }) => (
  <>
    {bars.map(b => {
      const c = b.up ? UP : DOWN;
      const h = Math.max(2, b.bottom - b.top);
      const left = Math.round(b.x) - Math.floor(width / 2);
      return (
        <g key={b.x} fill={c}>
          <rect x={Math.round(b.x)} y={b.high} width="1" height={Math.max(1, b.low - b.high)} />
          <rect x={left} y={b.top} width={width} height={h} />
          <rect x={left} y={base - b.volume} width={width} height={b.volume} />
        </g>
      );
    })}
    {lines.map(([c, w, pts], i) => (
      <polyline key={i} points={line(pts)} fill="none" stroke={c} strokeWidth={w} />
    ))}
  </>
);

const VolumeLines = ({ bars, base }) =>
  [["#d838b8", 5], ["#f0a800", 20], ["#0a9838", 60], ["#787878", 120]].map(([c, n]) => (
    <polyline
      key={n}
      points={line(average(bars, "volume", n).map(([x, v]) => [x, base - v]))}
      fill="none"
      stroke={c}
      strokeWidth="1"
    />
  ));

const Axis = ({ x, right, top, bottom, split, labels, volumeLabels, minor }) => (
  <g>
    <rect x={x} y={top} width={right - x} height={bottom - top} fill="#d6e1f0" />
    {minor.map(y => <path key={y} d={`M${x} ${y}h3`} stroke="#999" />)}
    {[...labels, ...volumeLabels].map(([t, y]) => (
      <g key={t}>
        <path d={`M${x} ${y}h7`} stroke="#888" />
        <text x={x + 10} y={y + 4} fill="#444">{t}</text>
      </g>
    ))}
    <path d={`M${x} ${top}v${bottom - top}M0 ${split}H${right}`} stroke="#999" fill="none" />
  </g>
);

const PriceTag = ({ x, y, value, change }) => (
  <g>
    <rect x={x} y={y} width="73" height="17" fill={UP} />
    <text x={x + 4} y={y + 14} fill="#fff">{value}</text>
    <text x={x + 4} y={y + 30} fill={RED}>{change}</text>
  </g>
);

const CloseMark = ({ x, y }) => (
  <g>
    <rect x={x} y={y} width="10" height="9" fill="#555" />
    <path d={`M${x + 3} ${y + 3}l4 4m0-4l-4 4`} stroke="#fff" />
  </g>
);

const rangeOf = (n, fn) => Array.from({ length: n }, (_, i) => fn(i));

const dailyY = price => Math.round(125 + ((35000 - price) / 2500) * 26.05);
const dailyLabels = rangeOf(15, i => [(37500 - i * 2500).toLocaleString("en-US"), dailyY(37500 - i * 2500)]);
const dailyMonths = [[1170, ""], [1302, ""], [1420, "10"], [1539, "11"], [1677, "12"], [1814, "2022/01"], [1939, "02"], [2052, "03"], [2183, "04"], [2315, "05"]];

const DailyChart = () => (
  <ChartSvg $h={563} viewBox="7 69 2499 563" preserveAspectRatio="xMaxYMid slice">
    <g stroke="#e6e6e6" strokeWidth="2" fill="none">
      {dailyLabels.map(([t, y]) => <path key={t} d={`M7 ${y}H2424`} />)}
      <path d="M7 509H2424M7 558H2424" />
      {dailyMonths.map(([x]) => <path key={x} d={`M${x} 69V610`} />)}
    </g>
    <Plot bars={daily} lines={dailyLines} width={3} base={607} />
    <VolumeLines bars={daily} base={607} />
    <Axis
      x={2424} right={2506} top={69} bottom={610} split={478}
      labels={dailyLabels.filter(([t]) => t !== "37,500" && t !== "15,000")}
      volumeLabels={[["50,000K", 509], ["25,000K", 558]]}
      minor={[...rangeOf(15, i => 112 + i * 26), ...rangeOf(11, i => 484 + i * 12)]}
    />
    <text x="2426" y="84" fill={RED}>LC:195,28</text>
    <text x="2426" y="99" fill={DOWN}>HC:-57,06</text>
    <PriceTag x={2430} y={317} value="15,650" change="9,44%" />
    <PriceTag x={2430} y={576} value="8,564K" change="150,69%" />
    <CloseMark x={2493} y={483} />
    <rect x="7" y="610" width="2499" height="22" fill="#d6e1f0" />
    <path d="M7 610H2506M2424 610v22" stroke="#999" />
    {dailyMonths.filter(m => m[1]).map(([x, t]) => (
      <g key={t}>
        <path d={`M${x} 610v22`} stroke="#999" />
        <text x={x + 2} y="625" fill="#444">{t}</text>
      </g>
    ))}
    <text x="2434" y="625" fill="#444">05/17</text>
    <path d="M7 69H2506V632H7" fill="none" stroke="#999" strokeWidth="2" />
    <text x="1914" y="120" fill="#f00" textAnchor="end">최고 36,450 (02/03)</text>
    <path d="M1921 115h10M1932 109l8 6-8 6z" fill="#f00" stroke="#f00" />
    <path d="M1939 89h6v5h3l-6 6-6-6h3zM1932 173h6v5h3l-6 6-6-6h3z" fill="#000" />
    <text x="1755" y="281" fill="#444">배당락(0,00%)</text>
    <path d="M1804 285v20M1798 302h12l-6 7z" fill="#f00" stroke="#f00" />
  </ChartSvg>
);

const minuteY = price => Math.round(957 + ((15000 - price) / 250) * 29.85);
const minuteLabels = rangeOf(11, i => [(16500 - i * 250).toLocaleString("en-US"), minuteY(16500 - i * 250)]);
const minuteTimes = [[92, "11:30"], [204, "12:00"], [317, "12:30"], [429, "13:00"], [542, "13:30"], [654, "14:00"], [767, "14:30"], [879, "15:00"], [1074, "09:30"], [1187, "10:00"], [1299, "10:30"], [1412, "11:00"], [1524, "11:30"], [1637, "12:00"], [1741, "12:30"], [1854, "13:00"], [1966, "13:30"], [2079, "14:00"], [2192, "14:30"], [2304, "15:00"]];

const Legend = ({ items, y }) =>
  items.map(([x, t, c]) =>
    t ? (
      <text key={x} x={x} y={y} fill={c}>{t}</text>
    ) : (
      <rect key={x} x={x} y={y - 9} width="5" height="7" fill="#ccc" stroke="#777" />
    )
  );

const MinuteChart = () => (
  <ChartSvg $h={471} viewBox="12 764 2494 471" preserveAspectRatio="xMaxYMid slice">
    <g stroke="#e6e6e6" strokeWidth="2" fill="none">
      {minuteLabels.map(([t, y]) => <path key={t} d={`M12 ${y}H2423`} />)}
      <path d="M12 1106H2423M12 1158H2423" />
      {minuteTimes.map(([x]) => <path key={x} d={`M${x} 764V1212`} />)}
      <path d="M955 764V1212M2379 764V1212" />
    </g>
    <path d="M962 764V1212" stroke="#e85050" />
    <text x="918" y="1060" fill="#00f" textAnchor="end">최저 14,150 (15:17)</text>
    <path d="M924 1056h12M937 1050l8 6-8 6z" fill="#00f" stroke="#00f" />
    <Plot bars={minute} lines={minuteLines} width={4} base={1210} />
    <VolumeLines bars={minute} base={1210} />
    <g strokeWidth="3">
      <path d="M12 812H2423" stroke="#ff00dc" />
      <path d="M12 909H2423" stroke="#0000ff" />
      <path d="M12 1041H2423" stroke="#0a8a30" />
      <path d="M12 1052H2423" stroke="#101068" />
    </g>
    <Axis
      x={2423} right={2505} top={764} bottom={1212} split={1083}
      labels={minuteLabels.filter(([t]) => !["16,500", "14,000", "15,500"].includes(t))}
      volumeLabels={[["500,000", 1106], ["250,000", 1158]]}
      minor={[...rangeOf(10, i => 793 + i * 30), ...rangeOf(12, i => 1086 + i * 10)]}
    />
    <text x="2425" y="778" fill={RED}>LC:10,60</text>
    <text x="2425" y="793" fill={DOWN}>HC:-4,86</text>
    <PriceTag x={2428} y={870} value="15,650" change="9,44%" />
    <PriceTag x={2428} y={1179} value="79,995" change="282,11%" />
    <CloseMark x={2491} y={1088} />
    <rect x="12" y="1212" width="2494" height="22" fill="#d6e1f0" />
    <path d="M12 1212H2506M2423 1212v22M955 1212v22M962 1212v22M2379 1212v22" stroke="#999" />
    {minuteTimes.map(([x, t]) => (
      <g key={x}>
        <path d={`M${x} 1212v22`} stroke="#999" />
        <text x={x + 2} y="1227" fill="#444">{t}</text>
      </g>
    ))}
    <text x="14" y="1227" fill="#333" fontWeight="700">05/16</text>
    <text x="964" y="1227" fill="#333" fontWeight="700">05/17</text>
    <text x="2433" y="1227" fill="#444">15:30:00</text>
    <rect x="12" y="764" width="2494" height="471" fill="none" stroke="#999" strokeWidth="2" />
    <rect x="26" y="766" width="65" height="18" fill="#e8e8e8" stroke="#ccc" />
    <Legend
      y={780}
      items={[
        [17, ""], [30, "휴마시스", "#333"], [97, ""], [110, "종가 단순 5", "#e018b0"], [199, "10", "#1838b8"],
        [223, "20", "#f0a800"], [248, "60", "#0a9838"], [272, "120", "#888"], [303, ""],
        [316, "종가 단순 240", "#e018b0"], [418, "480", "#1838b8"],
      ]}
    />
    <path d="M20 788h15v16H20zM23 791h9v10h-9zM26 791v10M29 791v10M23 796h9" fill="#ddd" stroke="#444" />
    <Legend
      y={1099}
      items={[[17, ""], [30, "거래량", "#2a9898"], [85, "단순 5", "#e018b0"], [138, "20", "#f0a800"], [162, "60", "#0a9838"], [188, "120", "#888"]]}
    />
    <text x="19" y="1116" fill="#444">79,995주(282,11%)</text>
    <text x="1902" y="792" fill="#f00" textAnchor="end">최고 16,450 (13:19)</text>
    <path d="M1907 788h10M1918 782l8 6-8 6z" fill="#f00" stroke="#f00" />
  </ChartSvg>
);

/* ---------- playback bar ---------- */

const Playback = styled.div`
  display: flex;
  align-items: center;
  height: 22px;
  background: #f0f0f0;
`;

const Thumb = styled.div`
  flex: 1;
  height: 20px;
  background: #efefef;
  border: 1px solid #fff;
  border-right: 2px solid #888;
  border-bottom: 2px solid #999;
`;

const Groove = styled.div`
  width: 599px;
  height: 20px;
  background: #f8f8f8;
`;

const SliderBox = styled.label`
  display: block;
  width: 86px;
  height: 20px;
  margin: 0 10px 0 7px;
  background: repeating-linear-gradient(to right, #222 0 2px, transparent 2px 8px) 3px 16px / 82px 3px no-repeat;
`;

const Slider = styled.input`
  display: block;
  appearance: none;
  width: 86px;
  height: 14px;
  margin: 0;
  background: linear-gradient(#999, #999) 0 6px / 86px 2px no-repeat;
  &::-webkit-slider-thumb {
    appearance: none;
    width: 5px;
    height: 12px;
    background: #f4f4f4;
    border: 1px solid #aaa;
    border-right: 2px solid #777;
  }
`;

const IconButton = styled.button`
  display: flex;
  align-items: center;
  justify-content: center;
  width: 21px;
  height: 21px;
  flex: none;
  padding: 0;
  border: 0;
  background: ${p => (p.$on ? "#fff" : "transparent")};
  border-left: ${p => (p.$on ? "1px solid #aaa" : "0")};
`;

const chartTools = [
  ["새 창", [["M14 6V3a2 2 0 0 0-2-2H3a2 2 0 0 0-2 2v9a2 2 0 0 0 2 2h3"], ["M8 7h9v9H8zM12 7v9M8 12h9", "", 2]]],
  ["겹치기", [["M6 10H1V1h12v5"], ["M6 6h11v10H6zM6 7h11", "", 2]]],
  ["영역", [["M0 2h16M0 16h16", "2 2", 2], ["M2 10l3 3 5-5 2 3 4-4"], ["M17 0v4M17 14v4", "", 2]]],
  ["십자선", [["M0 4h17M5 0v17", "", 2], ["M8 8l7 8M8 14V8h6", "", 2]]],
  ["고가선", [["M0 3h17", "", 2], ["M1 14h3l4-8 3 8 2-5 4 5"]]],
  ["저가선", [["M5 0v17M0 15l6-3", "", 2], ["M7 14l4-8 3 7 3-4"]]],
  ["추세선", [["M0 15L12 1", "", 2], ["M3 14h3l4-9 3 8 4 2"]]],
  ["지우개", [["M1 9l7-7h7l-7 7zM1 9v5h7V9M8 14l7-7V2"], ["M10 17v-5M13 17v-6M16 17v-5", "", 2]]],
  ["복사", [["M6 7V1h11v9h-3"], ["M1 7h12v9H1z", "", 2], ["M3 13l3-3 2 3 3-3"]]],
  ["돋보기", [["M7 1a6 6 0 1 0 1 0M11 12l5 5", "", 2]]],
  ["축소", [["M3 9h12", "", 3]]],
  ["확대", [["M3 9h12M9 3v12", "", 3]]],
];

const PlaybackBar = ({ groove }) => (
  <Playback>
    {groove && (
      <>
        <Button $w={21} $h={20} aria-label="왼쪽">
          <svg width="6" height="10" viewBox="0 0 6 10"><path d="M5 0v10L0 5z" fill="#000" /></svg>
        </Button>
        <Groove />
      </>
    )}
    <Thumb />
    {[
      ["재생", "M5 3l6 5-6 5z"],
      ["뒤로", "M8 3L2 8l6 5zM14 3L8 8l6 5z"],
      ["정지", "M3 3h9v9H3z"],
      ["앞으로", "M2 3l6 5-6 5zM8 3l6 5-6 5z"],
    ].map(([t, d]) => (
      <Button key={t} $w={21} $h={20} aria-label={t}>
        <svg width="16" height="16" viewBox="0 0 16 16"><path d={d} fill="#000" /></svg>
      </Button>
    ))}
    <SliderBox><Slider type="range" defaultValue="66" aria-label="재생 속도" /></SliderBox>
    {chartTools.map(([t, shapes]) => (
      <IconButton key={t} $on={t === "십자선"} aria-label={t}>
        <svg width="18" height="18" viewBox="0 0 18 18">
          {shapes.map(([d, dash, w]) => (
            <path key={d} d={d} fill="none" stroke="#808080" strokeWidth={w || 1} strokeDasharray={dash} />
          ))}
        </svg>
      </IconButton>
    ))}
    <IconButton aria-label="글꼴"><Txt $c="#666" $bold $size={18}>A</Txt></IconButton>
  </Playback>
);

/* ---------- minute chart tool bars ---------- */

const QuoteBar = styled.div`
  display: flex;
  align-items: center;
  width: 937px;
  height: 25px;
  background: #f0f0f0;
  border: 1px solid #888;
`;

const QuoteItem = styled.span`
  width: ${p => p.$w}px;
  height: 23px;
  line-height: 23px;
  padding-right: 3px;
  flex: none;
  text-align: right;
  white-space: pre;
  font-size: 15px;
  color: ${p => p.$c || "#111"};
  border-right: ${p => (p.$end ? "1px solid #bbb" : "0")};
`;

const Check = styled.label`
  display: flex;
  align-items: center;
  gap: 2px;
  font-size: 15px;
  & input { width: 16px; height: 16px; margin: 0; }
`;

const Note = styled.span`
  width: 225px;
  padding-left: 5px;
  color: #555;
  font-size: 15px;
  white-space: nowrap;
`;

const MinuteTools = () => (
  <Row $h={24}>
    <Button $w={25} aria-label="목록 열기">
      <svg width="16" height="16" viewBox="0 0 16 16"><path d="M3 2h11v12H3z" fill="#fff" stroke="#333" /><path d="M3 3h11" stroke="#333" strokeWidth="2" /><path d="M2 6l5 4-5 4z" fill="#333" /></svg>
    </Button>
    <CodeTools value="205470" speaker />
    <StockBadge w={113} />
    <Note>※분봉 마크는 최근 2개월만 조회</Note>
    <Button $w={24} $bg="#f5cfca">일</Button>
    <Button $w={25} $bg="#4a80c4" $c="#fff">1</Button>
    <Button $w={17} aria-label="일 간격"><Caret /></Button>
    <Gap $w={4} />
    <Button $w={24}>주</Button>
    <Button $w={24}>월</Button>
    <Button $w={24}>년</Button>
    <Gap $w={2} />
    <Button $w={24} $bg="#4a80c4" $c="#fff">분</Button>
    <Button $w={24}>초</Button>
    <Button $w={24}>틱</Button>
    <CodeInput $w={29} defaultValue="1" aria-label="분 간격" />
    <Button $w={18} aria-label="분 간격 목록"><Caret /></Button>
    <Gap $w={2} />
    <CodeInput $w={38} defaultValue="632" aria-label="표시 봉 수" />
    <Txt $c="#555">/900</Txt>
    <Gap $w={12} />
    <Button $w={24} aria-label="봉 유형">
      <svg width="18" height="18" viewBox="0 0 18 18"><path d="M2 3h4v8H2zM8 5h4v5H8z" fill="#555" /><path d="M4 0v14M10 2v11M11 15h6M14 12v6" stroke="#555" strokeWidth="2" /></svg>
    </Button>
    <Button $w={24} aria-label="지표 추가">
      <svg width="18" height="18" viewBox="0 0 18 18"><path d="M1 9l4-5 4 4 6-7M1 12l4-3 4 3 4-5" fill="none" stroke="#666" /><path d="M11 15h6M14 12v6" stroke="#666" strokeWidth="2" /></svg>
    </Button>
    <Button $w={24} aria-label="저장">
      <svg width="18" height="18" viewBox="0 0 18 18"><path d="M2 2h12l2 2v12H2zM5 2v5h8V2M5 16v-6h8v6" fill="none" stroke="#555" /></svg>
    </Button>
    <Button $w={24} aria-label="설정"><Gear /></Button>
    <Gap $w={3} />
    <Check><input type="checkbox" />D</Check>
    <Gap $w={4} />
    <CodeInput $w={49} defaultValue="05/17" aria-label="날짜" />
    <Button $w={24} aria-label="달력"><CalendarIcon /></Button>
  </Row>
);

const MinuteQuote = () => (
  <Row $gap={4}>
    <QuoteBar>
      <QuoteItem $w={94} $c={RED}>15,650 ▲</QuoteItem>
      <QuoteItem $w={61} $c={RED}>1,350</QuoteItem>
      <QuoteItem $w={60} $c={RED} $end>+9.44%</QuoteItem>
      <QuoteItem $w={89}>8,564,119</QuoteItem>
      <QuoteItem $w={72} $c={RED}>150.69%</QuoteItem>
      <QuoteItem $w={53} $end>25.02%</QuoteItem>
      <QuoteItem $w={102} $end>132,660백만</QuoteItem>
      <QuoteItem $w={48}>최우선</QuoteItem>
      <QuoteItem $w={60} $c={RED}>15,650</QuoteItem>
      <QuoteItem $w={64} $c={RED} $end>15,600</QuoteItem>
      <QuoteItem $w={18}>시</QuoteItem>
      <QuoteItem $w={55} $c={BLUE}>14,200</QuoteItem>
      <QuoteItem $w={22}>고</QuoteItem>
      <QuoteItem $w={55} $c={RED}>16,450</QuoteItem>
      <QuoteItem $w={22}>저</QuoteItem>
      <QuoteItem $w={55} $c={BLUE}>14,200</QuoteItem>
    </QuoteBar>
    <Button $w={48} $h={25} $bg="#f5cfca">매수</Button>
    <Button $w={48} $h={25} $bg="#c4daf0">매도</Button>
  </Row>
);

export default function App() {
  return (
    <Desktop>
      <GlobalStyle />
      <UpperWindow $top={66}>
        <DailyChart />
        <PlaybackBar />
      </UpperWindow>
      <LowerWindow $top={37}>
        <MinuteTools />
        <Row $pad="9px 0 5px"><MinuteQuote /></Row>
        <MinuteChart />
        <PlaybackBar groove />
      </LowerWindow>
      <InvestorWindow />
      <PriceWindow />
      <OrderWindow />
    </Desktop>
  );
}
